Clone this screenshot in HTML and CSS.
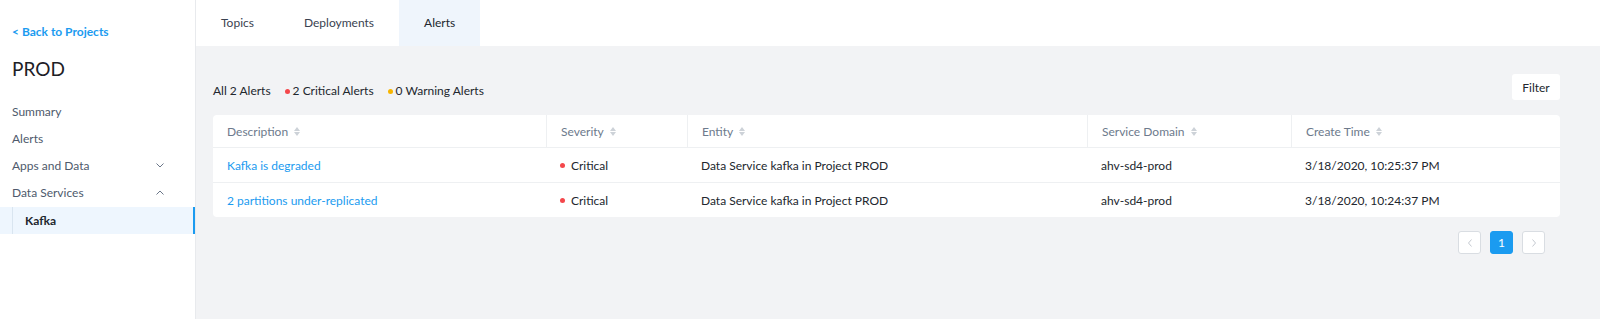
FILE: index.html
```html
<!DOCTYPE html>
<html>
<head>
    <title>PROD - Alerts</title>
    <link rel="stylesheet" href="styles.css">
</head>
<body>

    <div class="sidebar">
        <a class="back-link" href="#">&lt; Back to Projects</a>
        <h1 class="project-name">PROD</h1>
        <ul class="nav">
            <li class="nav-item">Summary</li>
            <li class="nav-item">Alerts</li>
            <li class="nav-item">Apps and Data
                <svg class="chevron" width="8" height="5" viewBox="0 0 8 5"><path d="M0.5 0.5 L4 4 L7.5 0.5" fill="none" stroke="#6b7688" stroke-width="1"/></svg>
            </li>
            <li class="nav-item">Data Services
                <svg class="chevron" width="8" height="5" viewBox="0 0 8 5"><path d="M0.5 4.5 L4 1 L7.5 4.5" fill="none" stroke="#6b7688" stroke-width="1"/></svg>
            </li>
            <li class="sub-item active">Kafka</li>
        </ul>
    </div>

    <div class="main">
        <div class="tabs">
            <div class="tab">Topics</div>
            <div class="tab">Deployments</div>
            <div class="tab active">Alerts</div>
        </div>

        <div class="content">
            <div class="toolbar">
                <div class="alert-counts">
                    <span class="count">All 2 Alerts</span>
                    <span class="count"><i class="dot critical"></i>2 Critical Alerts</span>
                    <span class="count"><i class="dot warning"></i>0 Warning Alerts</span>
                </div>
                <button class="filter-btn">Filter</button>
            </div>

            <div class="table">
                <div class="row header">
                    <div class="cell col-desc">Description <span class="sort"></span></div>
                    <div class="cell col-sev">Severity <span class="sort"></span></div>
                    <div class="cell col-entity">Entity <span class="sort"></span></div>
                    <div class="cell col-domain">Service Domain <span class="sort"></span></div>
                    <div class="cell col-time">Create Time <span class="sort"></span></div>
                </div>
                <div class="row">
                    <div class="cell col-desc"><a href="#">Kafka is degraded</a></div>
                    <div class="cell col-sev"><i class="dot critical big"></i>Critical</div>
                    <div class="cell col-entity">Data Service kafka in Project PROD</div>
                    <div class="cell col-domain">ahv-sd4-prod</div>
                    <div class="cell col-time">3/18/2020, 10:25:37 PM</div>
                </div>
                <div class="row">
                    <div class="cell col-desc"><a href="#">2 partitions under-replicated</a></div>
                    <div class="cell col-sev"><i class="dot critical big"></i>Critical</div>
                    <div class="cell col-entity">Data Service kafka in Project PROD</div>
                    <div class="cell col-domain">ahv-sd4-prod</div>
                    <div class="cell col-time">3/18/2020, 10:24:37 PM</div>
                </div>
            </div>

            <div class="pagination">
                <button class="page-btn">
                    <svg width="6" height="8" viewBox="0 0 6 8"><path d="M4.5 0.5 L1.5 4 L4.5 7.5" fill="none" stroke="#c5cad1" stroke-width="1"/></svg>
                </button>
                <button class="page-btn current">1</button>
                <button class="page-btn">
                    <svg width="6" height="8" viewBox="0 0 6 8"><path d="M1.5 0.5 L4.5 4 L1.5 7.5" fill="none" stroke="#c5cad1" stroke-width="1"/></svg>
                </button>
            </div>
        </div>
    </div>

</body>
</html>
```

FILE: styles.css
```css
body {
    margin: 0;
    font-family: 'Lato', 'Liberation Sans', sans-serif;
    font-size: 12px;
    color: #22272e;
    display: flex;
    height: 100vh;
    background-color: #f2f3f5;
}

/* Left navigation */
.sidebar {
    width: 195px;
    flex-shrink: 0;
    background-color: #ffffff;
    border-right: 1px solid #e8eaed;
    padding-top: 23px;
}

.back-link {
    display: block;
    margin-left: 12px;
    color: #1b9bf0;
    font-weight: bold;
    text-decoration: none;
    line-height: 18px;
}

.project-name {
    margin: 16px 0 0 12px;
    font-size: 19px;
    font-weight: normal;
    line-height: 24px;
    color: #1d2026;
}

.nav {
    list-style: none;
    margin: 17px 0 0 0;
    padding: 0;
}

.nav-item {
    display: flex;
    justify-content: space-between;
    align-items: center;
    height: 27px;
    padding: 0 31px 0 12px;
    color: #4e5a6c;
}

.chevron {
    display: block;
}

.sub-item {
    height: 27px;
    line-height: 27px;
    margin-top: 1px;
    padding-left: 25px;
    font-weight: bold;
    color: #22272e;
}

.sub-item.active {
    background-color: #eef6fe;
    background-image: linear-gradient(to right, transparent 12px, #d9e5f0 12px, #d9e5f0 13px, transparent 13px);
    border-right: 2px solid #1b9bf0;
}

/* Main area */
.main {
    flex: 1;
    display: flex;
    flex-direction: column;
}

.tabs {
    display: flex;
    height: 46px;
    background-color: #ffffff;
}

.tab {
    padding: 0 25px;
    line-height: 46px;
    color: #3a4250;
}

.tab.active {
    background-color: #eff5fc;
    color: #22272e;
}

.content {
    padding: 0 40px 0 17px;
}

.toolbar {
    display: flex;
    justify-content: space-between;
    align-items: flex-end;
    margin-top: 28px;
}

.alert-counts {
    display: flex;
    gap: 14px;
    line-height: 18px;
}

.count {
    display: flex;
    align-items: center;
}

.dot {
    display: inline-block;
    width: 5px;
    height: 5px;
    border-radius: 50%;
    margin-right: 3px;
}

.dot.big {
    margin-right: 6px;
}

.dot.critical {
    background-color: #f4474b;
}

.dot.warning {
    background-color: #f7b500;
}

.filter-btn {
    font-family: inherit;
    font-size: 12px;
    font-weight: normal;
    color: #22272e;
    background-color: #ffffff;
    border: none;
    border-radius: 3px;
    width: 48px;
    height: 26px;
    padding: 0;
}

/* Alerts table */
.table {
    margin-top: 15px;
    background-color: #ffffff;
    border-radius: 4px;
    overflow: hidden;
}

.row {
    display: flex;
    height: 34px;
    border-top: 1px solid #eef0f2;
}

.row.header {
    height: 32px;
    border-top: none;
    color: #6d7a8c;
}

.cell {
    display: flex;
    align-items: center;
    padding-left: 14px;
    box-sizing: border-box;
}

.header .cell + .cell {
    border-left: 1px solid #eef0f2;
}

.col-desc { width: 333px; }
.col-sev { width: 141px; }
.col-entity { width: 400px; }
.col-domain { width: 204px; }
.col-time { flex: 1; }

.cell a {
    color: #1b9bf0;
    text-decoration: none;
}

.sort {
    display: inline-flex;
    flex-direction: column;
    gap: 1px;
    margin-left: 6px;
}

.sort::before,
.sort::after {
    content: '';
    border-left: 3.5px solid transparent;
    border-right: 3.5px solid transparent;
}

.sort::before {
    border-bottom: 4px solid #cdd2d8;
}

.sort::after {
    border-top: 4px solid #cdd2d8;
}

/* Pagination */
.pagination {
    display: flex;
    justify-content: flex-end;
    gap: 9px;
    margin-top: 14px;
    padding-right: 15px;
}

.page-btn {
    width: 23px;
    height: 23px;
    padding: 0;
    display: flex;
    align-items: center;
    justify-content: center;
    background-color: #ffffff;
    border: 1px solid #d9dde2;
    border-radius: 3px;
    font-family: inherit;
    font-size: 12px;
}

.page-btn.current {
    background-color: #1b9bf0;
    border-color: #1b9bf0;
    color: #ffffff;
}
```
